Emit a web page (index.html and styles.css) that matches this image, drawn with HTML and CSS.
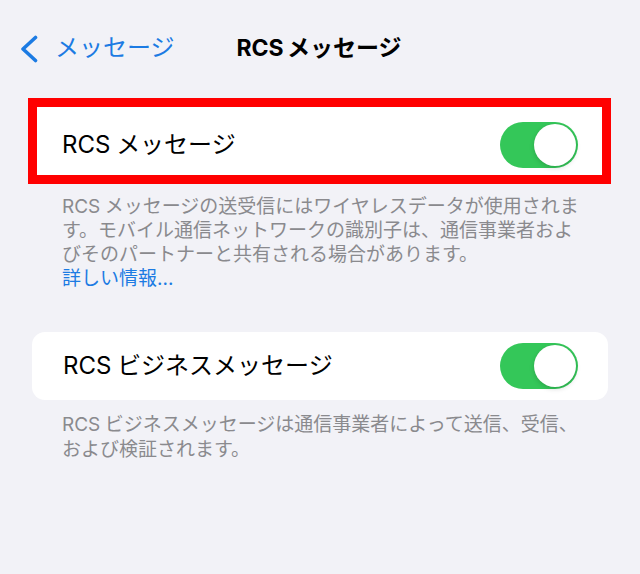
FILE: index.html
```html
<html>
	<head>
		<meta charset="utf-8">
		<title>RCSメッセージ</title>
		<link rel="stylesheet" href="styles.css">
	</head>
	<body>
		<div id="nav">
			<a class="back" href="#">
				<svg class="chevron" width="18" height="28" viewBox="0 0 18 28">
					<polyline points="15.5,2.5 3,14 15.5,25.5" fill="none" stroke="#1c7be3" stroke-width="3.6" stroke-linecap="round" stroke-linejoin="round"/>
				</svg>
				<span>メッセージ</span>
			</a>
			<h1 id="title">RCS メッセージ</h1>
			<div></div>
		</div>

		<div class="highlight">
			<div class="row first">
				<span class="label">RCS メッセージ</span>
				<div class="toggle on"><div class="knob"></div></div>
			</div>
		</div>
		<p class="note first-note">RCS メッセージの送受信にはワイヤレスデータが使用されます。モバイル通信ネットワークの識別子は、通信事業者およびそのパートナーと共有される場合があります。<br><a class="more" href="#">詳しい情報...</a></p>

		<div class="card">
			<div class="row">
				<span class="label">RCS ビジネスメッセージ</span>
				<div class="toggle on"><div class="knob"></div></div>
			</div>
		</div>
		<p class="note second-note">RCS ビジネスメッセージは通信事業者によって送信、受信、および検証されます。</p>
	</body>
</html>
```

FILE: styles.css
```css
body{
	margin: 0;
	background-color: #f2f2f7;
	font-family: Inter, "Noto Sans CJK JP", sans-serif;
	color: #000;
}
#nav{
	height: 96px;
	display: grid;
	grid-template-columns: 1fr auto 1fr;
	align-items: center;
}
.back{
	display: flex;
	align-items: center;
	gap: 17px;
	padding-left: 20px;
	color: #1c7be3;
	text-decoration: none;
	font-size: 24px;
	line-height: 30px;
}
.chevron{
	display: block;
	margin-top: 2px;
}
#title{
	margin: 0;
	font-size: 23px;
	font-weight: 700;
	line-height: 30px;
	padding-right: 2px;
	word-spacing: -2px;
}
.highlight{
	margin: 2px 29px 0 28px;
	border: 9px solid #ff0000;
	background-color: #fff;
}
.card{
	margin: 41px 32px 0 32px;
	background-color: #fff;
	border-radius: 13px;
}
.row{
	box-sizing: border-box;
	height: 68px;
	display: flex;
	align-items: center;
	justify-content: space-between;
	padding: 0 30px 0 31px;
}
.row.first{
	padding: 8px 24px 0 25px;
}
.label{
	font-size: 24px;
	line-height: 30px;
	word-spacing: -1px;
}
.toggle{
	width: 78px;
	height: 46px;
	border-radius: 23px;
	background-color: #e9e9ea;
	display: flex;
	align-items: center;
	padding: 0 2px;
	box-sizing: border-box;
}
.toggle.on{
	background-color: #34c759;
	justify-content: flex-end;
}
.knob{
	width: 42px;
	height: 42px;
	border-radius: 50%;
	background-color: #fff;
	box-shadow: 0 2px 5px rgba(0, 0, 0, 0.15), 0 0 1px rgba(0, 0, 0, 0.1);
}
.note{
	margin: 0;
	padding: 0 54px 0 62px;
	font-size: 19px;
	line-height: 24px;
	color: #8a8a8e;
	word-spacing: -1px;
}
.first-note{
	margin-top: 11px;
}
.second-note{
	margin-top: 12px;
	line-height: 25px;
}
.more{
	color: #1c7be3;
	text-decoration: none;
}
```
